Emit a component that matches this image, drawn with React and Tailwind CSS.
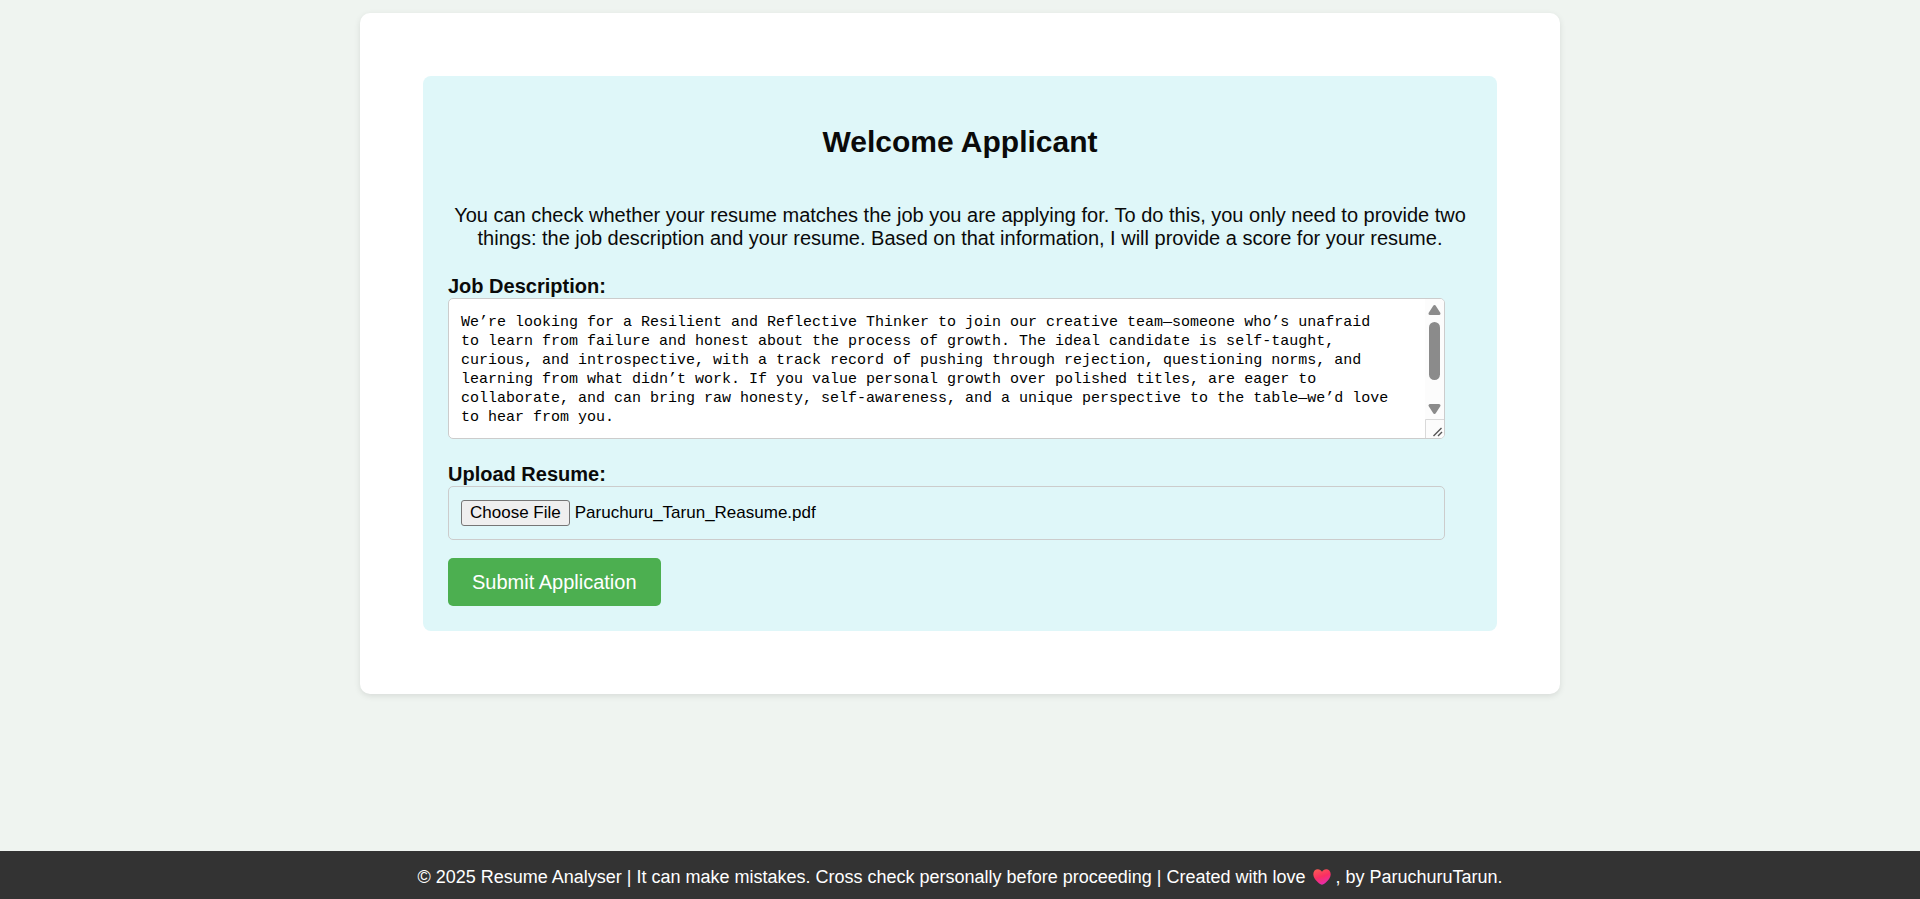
import { useEffect, useRef, useState } from "react";

const JOB_TEXT =
  "We’re looking for a Resilient and Reflective Thinker to join our creative team—someone who’s unafraid to learn from failure and honest about the process of growth. The ideal candidate is self-taught, curious, and introspective, with a track record of pushing through rejection, questioning norms, and learning from what didn’t work. If you value personal growth over polished titles, are eager to collaborate, and can bring raw honesty, self-awareness, and a unique perspective to the table—we’d love to hear from you.";

function ScrollTrack() {
  return (
    <svg
      className="pointer-events-none absolute top-px right-px h-[139px] w-[19px]"
      viewBox="0 0 19 139"
      fill="none"
      aria-hidden="true"
    >
      <path d="M0 0H15Q19 0 19 4V135Q19 139 15 139H0Z" fill="#fcfcfc" />
      <path
        d="M9.500 7.500L14 14.500H5Z"
        fill="#8b8b8b"
        stroke="#8b8b8b"
        strokeWidth="3"
        strokeLinejoin="round"
      />
      <rect x="4" y="23" width="11" height="58" rx="5.5" fill="#8b8b8b" />
      <path
        d="M5 106.500H14L9.500 113.500Z"
        fill="#8b8b8b"
        stroke="#8b8b8b"
        strokeWidth="3"
        strokeLinejoin="round"
      />
      <path d="M0.5 139V120.500H19" stroke="#d9d9d9" />
      <path d="M8.500 137L16.500 129M13 137L17 133" stroke="#555" strokeWidth="1.4" />
    </svg>
  );
}

function Heart() {
  return (
    <svg
      className="mr-1 ml-[3px] inline-block h-4 w-[18px] align-[-2px]"
      viewBox="0 0 18 16"
      role="img"
      aria-label="love"
    >
      <defs>
        <linearGradient id="heart" x1="0.2" y1="0" x2="0.6" y2="1">
          <stop offset="0" stopColor="#fb5a55" />
          <stop offset="0.5" stopColor="#fa2f62" />
          <stop offset="1" stopColor="#e52cb4" />
        </linearGradient>
      </defs>
      <path
        d="M9 15.8C7.600 15.800 0.300 10.600 0.300 5.200C0.300 2.300 2.300 0.300 4.800 0.300C6.600 0.300 8.100 1.200 9 2.700C9.900 1.200 11.400 0.300 13.200 0.300C15.700 0.300 17.700 2.300 17.700 5.200C17.700 10.600 10.400 15.800 9 15.800Z"
        fill="url(#heart)"
      />
    </svg>
  );
}

export default function App() {
  const [job, setJob] = useState(JOB_TEXT);
  const fileRef = useRef(null);

  useEffect(() => {
    const transfer = new DataTransfer();
    transfer.items.add(
      new File([""], "Paruchuru_Tarun_Reasume.pdf", { type: "application/pdf" })
    );
    fileRef.current.files = transfer.files;
  }, []);

  return (
    <div className="flex min-h-screen flex-col bg-[#eff4f0] font-['Liberation_Sans',Arial,sans-serif] text-xl leading-[23px] text-[#0a0a0a]">
      <main className="mx-auto mt-[13px] mb-8 w-full max-w-[1200px] rounded-[10px] bg-white p-[63px] shadow-[0_2px_6px_rgba(0,0,0,0.1)]">
        <section className="rounded-lg bg-[#dff7f9] p-[25px]">
          <h1 className="mt-6 text-center text-[30px] leading-[34px] font-bold">
            Welcome Applicant
          </h1>
          <p className="mt-[45px] text-center">
            You can check whether your resume matches the job you are applying for. To do this, you
            only need to provide two things: the job description and your resume. Based on that
            information, I will provide a score for your resume.
          </p>
          <form className="mt-[25px] mr-[27px]" onSubmit={(e) => e.preventDefault()}>
            <label htmlFor="job" className="block font-bold">
              Job Description:
            </label>
            <div className="relative">
              <textarea
                id="job"
                value={job}
                onChange={(e) => setJob(e.target.value)}
                className="block h-[141px] w-full resize-none overflow-hidden rounded-[5px] border border-[#ccc] bg-white pt-3.5 pr-[52px] pb-3 pl-3 font-['Liberation_Mono',Consolas,monospace] text-[15px] leading-[19px] text-black outline-none"
              />
              <ScrollTrack />
            </div>
            <label htmlFor="resume" className="mt-6 block font-bold">
              Upload Resume:
            </label>
            <input
              id="resume"
              ref={fileRef}
              type="file"
              className="block h-[54px] w-full rounded-[5px] border border-[#ccc] px-3 py-[13px] text-[17px] leading-5 text-black file:mr-[5px] file:h-[26px] file:rounded-[3px] file:border file:border-solid file:border-[#767676] file:bg-[#efefef] file:px-2 file:text-[17px] file:leading-5 file:text-black"
            />
            <button
              type="submit"
              className="mt-[18px] block h-12 rounded-[5px] bg-[#4caf50] px-6 text-white"
            >
              Submit Application
            </button>
          </form>
        </section>
      </main>
      <footer className="mt-auto bg-[#333] px-4 pt-3.5 pb-2.5 text-center text-[18px] leading-6 text-white">
        © 2025 Resume Analyser | It can make mistakes. Cross check personally before proceeding |
        Created with love <Heart />, by ParuchuruTarun.
      </footer>
    </div>
  );
}
